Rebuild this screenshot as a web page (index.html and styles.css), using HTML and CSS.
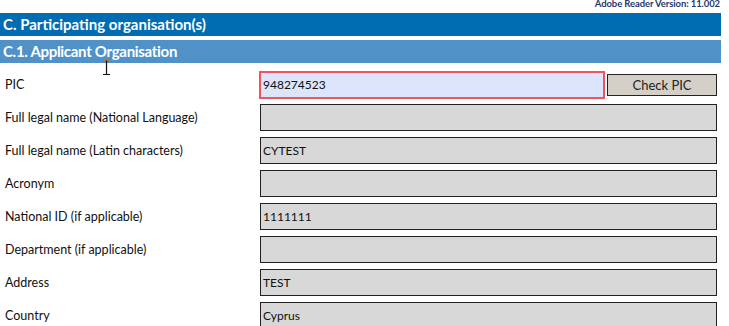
FILE: index.html
```html
<!DOCTYPE html>
<html lang="en">
<head>
  <meta charset="UTF-8">
  <title>Participating organisation(s)</title>
  <link rel="stylesheet" href="styles.css">
</head>
<body>
  <div class="version">Adobe Reader Version: 11.002</div>
  <div class="section">C. Participating organisation(s)</div>
  <div class="subsection">C.1. Applicant Organisation</div>

  <svg class="cursor" width="9" height="17" viewBox="0 0 9 17">
    <path d="M1 1.5h7" stroke="#c8742a" stroke-width="1.2"/>
    <path d="M4.5 1.5v14M1 15.5h7" stroke="#111" stroke-width="1.2"/>
  </svg>

  <div class="form">
    <div class="row">
      <label>PIC</label>
      <div class="field pic">948274523</div>
      <button class="check">Check PIC</button>
    </div>
    <div class="row">
      <label>Full legal name (National Language)</label>
      <div class="field"></div>
    </div>
    <div class="row">
      <label>Full legal name (Latin characters)</label>
      <div class="field">CYTEST</div>
    </div>
    <div class="row">
      <label>Acronym</label>
      <div class="field"></div>
    </div>
    <div class="row">
      <label>National ID (if applicable)</label>
      <div class="field">1111111</div>
    </div>
    <div class="row">
      <label>Department (if applicable)</label>
      <div class="field"></div>
    </div>
    <div class="row">
      <label>Address</label>
      <div class="field">TEST</div>
    </div>
    <div class="row">
      <label>Country</label>
      <div class="field">Cyprus</div>
    </div>
  </div>
</body>
</html>
```

FILE: styles.css
```css
body {
  margin: 0;
  font-family: Lato, "DejaVu Sans Condensed", sans-serif;
  background: #fff;
  color: #111;
  position: relative;
  overflow: hidden;
}
.version {
  width: 720px;
  height: 9px;
  font-size: 9.5px;
  line-height: 7px;
  font-weight: bold;
  letter-spacing: -0.1px;
  text-align: right;
  color: #1d3a6d;
}
.section, .subsection {
  width: 718px;
  height: 23px;
  padding-left: 3px;
  line-height: 23px;
  font-size: 15px;
  font-weight: bold;
  color: #fff;
}
.section {
  margin-top: 4px;
  background: #006db3;
}
.subsection {
  margin-top: 4px;
  background: #5091c8;
  letter-spacing: -0.3px;
}
.cursor {
  position: absolute;
  left: 102px;
  top: 59px;
}
.form {
  margin-top: 5px;
}
.row {
  display: flex;
  align-items: center;
  height: 33px;
}
.row label {
  width: 255px;
  padding-left: 5px;
  font-size: 12.5px;
}
.field {
  box-sizing: border-box;
  width: 457px;
  height: 27px;
  padding-left: 2px;
  border: 1px solid #222;
  background: #d8d8d8;
  font-size: 12px;
  line-height: 25px;
}
.field.pic {
  margin-left: -1px;
  width: 346px;
  height: 28px;
  border: 2px solid #f2545b;
  background: #dce5fb;
  line-height: 24px;
}
.check {
  box-sizing: border-box;
  width: 110px;
  height: 22px;
  margin-left: 2px;
  padding: 0;
  border: 1px solid #222;
  background: #d4d0c8;
  font-family: inherit;
  font-size: 13px;
  color: #222;
}
```
